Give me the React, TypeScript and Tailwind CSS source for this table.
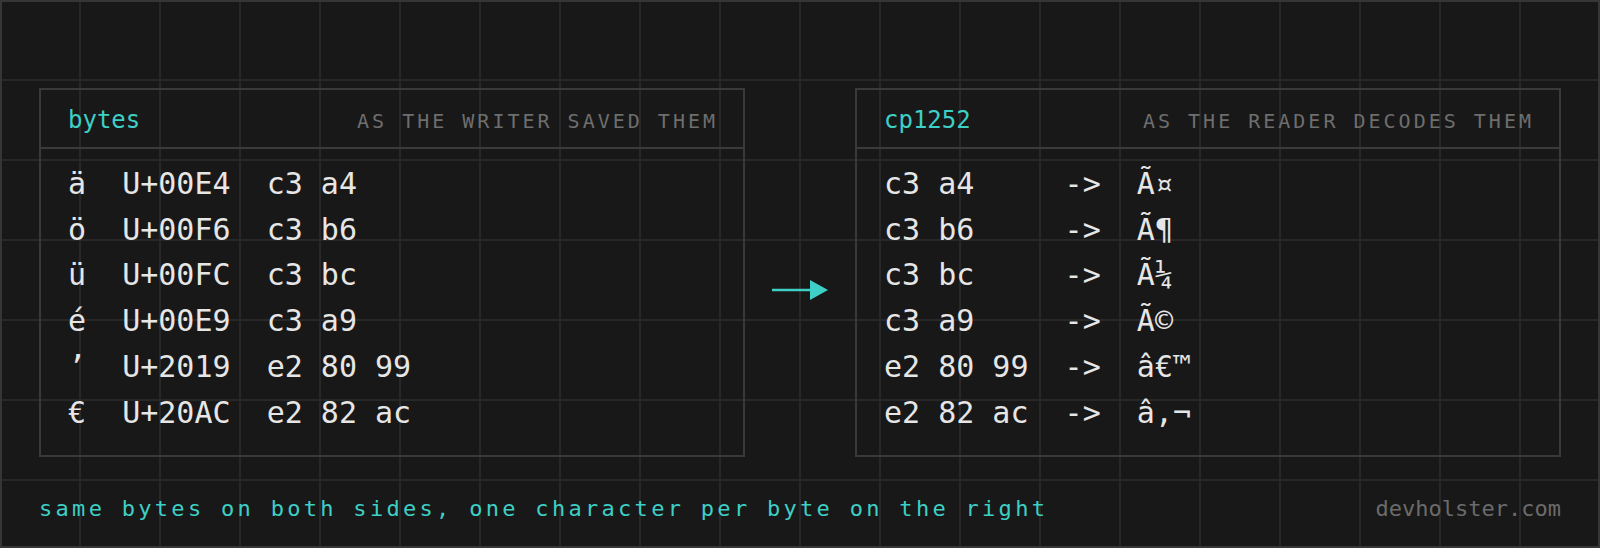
const written = [
  { ch: 'ä', cp: 'U+00E4', bytes: 'c3 a4' },
  { ch: 'ö', cp: 'U+00F6', bytes: 'c3 b6' },
  { ch: 'ü', cp: 'U+00FC', bytes: 'c3 bc' },
  { ch: 'é', cp: 'U+00E9', bytes: 'c3 a9' },
  { ch: '\u2019', cp: 'U+2019', bytes: 'e2 80 99' },
  { ch: '€', cp: 'U+20AC', bytes: 'e2 82 ac' },
];

const decoded = [
  { bytes: 'c3 a4', out: 'Ã¤' },
  { bytes: 'c3 b6', out: 'Ã¶' },
  { bytes: 'c3 bc', out: 'Ã¼' },
  { bytes: 'c3 a9', out: 'Ã©' },
  { bytes: 'e2 80 99', out: 'â€™' },
  { bytes: 'e2 82 ac', out: 'â\u201A¬' },
];

interface PanelProps {
  label: string;
  note: string;
  children: React.ReactNode;
}

function Panel({ label, note, children }: PanelProps) {
  return (
    <div className="flex h-[369px] w-[706px] shrink-0 flex-col border-2 border-[#3a3a3a]">
      <div className="flex items-baseline justify-between border-b-2 border-[#3a3a3a] pt-[16px] pr-[25px] pb-[13px] pl-[27px]">
        <span className="text-[24px] leading-[28px] text-[#3ecfc6]">{label}</span>
        <span className="text-[20px] leading-[24px] tracking-[3px] text-[#6e6e6e]">{note}</span>
      </div>
      <div className="pt-3 pl-[27px] text-[30px] leading-[45.7px] text-[#e6e6e6]">{children}</div>
    </div>
  );
}

function Arrow() {
  return (
    <svg width="56" height="20" viewBox="0 0 56 20" className="block">
      <rect x="0" y="8.75" width="40" height="2.5" fill="#3ecfc6" />
      <path d="M38 0 L56 10 L38 20 Z" fill="#3ecfc6" />
    </svg>
  );
}

export default function App() {
  return (
    <div
      className={
        "h-[548px] w-[1600px] border-2 border-[#363636] bg-[#181818] bg-origin-border px-[37px] pt-[86px] font-['DejaVu_Sans_Mono',monospace] " +
        'bg-[linear-gradient(to_right,#282828_2px,transparent_2px),linear-gradient(to_bottom,#282828_2px,transparent_2px)] bg-[size:80px_80px] bg-[position:-1px_-1px]'
      }
    >
      <div className="flex items-start">
        <Panel label="bytes" note="AS THE WRITER SAVED THEM">
          {written.map((r) => (
            <div key={r.cp} className="flex whitespace-pre">
              <span className="w-[3ch]">{r.ch}</span>
              <span className="w-[8ch]">{r.cp}</span>
              <span>{r.bytes}</span>
            </div>
          ))}
        </Panel>

        <div className="flex w-[110px] shrink-0 justify-center pt-[192px]">
          <Arrow />
        </div>

        <Panel label="cp1252" note="AS THE READER DECODES THEM">
          {decoded.map((r) => (
            <div key={r.bytes} className="flex whitespace-pre">
              <span className="w-[10ch]">{r.bytes}</span>
              <span className="w-[4ch]">-&gt;</span>
              <span>{r.out}</span>
            </div>
          ))}
        </Panel>
      </div>

      <div className="mt-[39px] flex items-baseline justify-between text-[22px] leading-[26px]">
        <span className="tracking-[3.3px] text-[#3ecfc6]">
          same bytes on both sides, one character per byte on the right
        </span>
        <span className="text-[#6b6b6b]">devholster.com</span>
      </div>
    </div>
  );
}
